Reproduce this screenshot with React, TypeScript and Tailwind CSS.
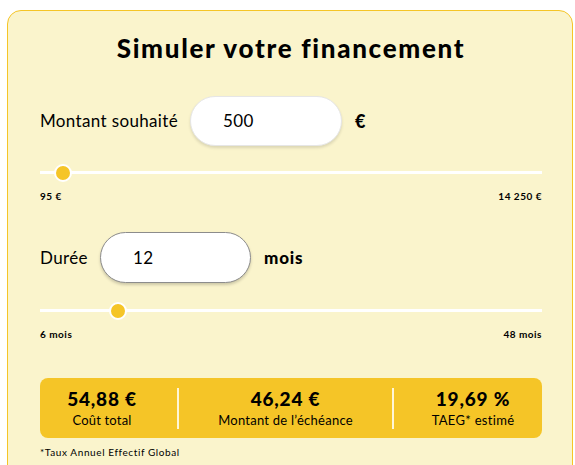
import React from "react";

function Slider({ pct }: { pct: number }) {
  return (
    <div className="relative h-[18px] w-full">
      <div className="absolute left-0 right-0 top-[7px] h-[3px] bg-white" />
      <div
        className="absolute top-0 h-[18px] w-[18px] rounded-full border-2 border-white bg-[#f5c527]"
        style={{ left: `calc(${pct} * (100% - 18px))` }}
      />
    </div>
  );
}

export default function App() {
  const font = { fontFamily: "Lato, 'Liberation Sans', sans-serif" };
  return (
    <div className="h-[465px] w-full overflow-hidden bg-white text-black" style={font}>
      <div className="ml-[7px] mt-[10px] h-[480px] w-[566px] rounded-[14px] border border-[#f5c527] bg-[#faf4cc] pl-[32px] pr-[30px] pt-[21px]">
        <h1 className="text-center text-[26px] font-black leading-[32px] tracking-[1.7px]">
          Simuler votre financement
        </h1>

        <div className="mt-[32px] flex items-center">
          <span className="w-[150px] text-[17px] leading-[22px] tracking-[0.35px]">Montant souhaité</span>
          <div className="flex h-[50px] w-[152px] items-center rounded-full border border-[#e6e6e6] bg-white pl-[32px] text-[17px] tracking-[0.4px] shadow-[0_2px_3px_rgba(0,0,0,0.12)]">
            500
          </div>
          <span className="ml-[13px] text-[18px] font-black">€</span>
        </div>

        <div className="mt-[18px]">
          <Slider pct={0.0286} />
        </div>
        <div className="mt-[7px] flex justify-between text-[10px] font-bold leading-[14px] tracking-[0.5px]">
          <span>95 €</span>
          <span>14 250 €</span>
        </div>

        <div className="mt-[29px] flex items-center">
          <span className="w-[60px] text-[17px] leading-[22px] tracking-[0.35px]">Durée</span>
          <div className="flex h-[51px] w-[151px] items-center rounded-full border border-[#8c8c8c] bg-white pl-[32px] text-[17px] tracking-[0.4px] shadow-[0_2px_3px_rgba(0,0,0,0.18)]">
            12
          </div>
          <span className="ml-[13px] text-[17px] font-black tracking-[0.8px]">mois</span>
        </div>

        <div className="mt-[19px]">
          <Slider pct={0.1429} />
        </div>
        <div className="mt-[7px] flex justify-between text-[10px] font-bold leading-[14px] tracking-[0.5px]">
          <span>6 mois</span>
          <span>48 mois</span>
        </div>

        <div className="mt-[37px] flex h-[60px] items-center rounded-[8px] bg-[#f5c527]">
          <div className="flex w-[137px] flex-col items-center pr-[13px]">
            <span className="text-[19px] font-black leading-[24px] tracking-[0.8px]">54,88 €</span>
            <span className="text-[13px] leading-[18px] tracking-[0.2px]">Coût total</span>
          </div>
          <div className="h-[41px] w-[2px] bg-[#fff6d6]" />
          <div className="flex w-[213px] flex-col items-center">
            <span className="text-[19px] font-black leading-[24px] tracking-[0.8px]">46,24 €</span>
            <span className="text-[13px] leading-[18px] tracking-[0.25px]">Montant de l’échéance</span>
          </div>
          <div className="h-[41px] w-[2px] bg-[#fff6d6]" />
          <div className="flex w-[148px] flex-col items-center pl-[10px]">
            <span className="text-[19px] font-black leading-[24px] tracking-[0.8px]">19,69 %</span>
            <span className="text-[13px] leading-[18px] tracking-[0.3px]">TAEG* estimé</span>
          </div>
        </div>

        <p className="mt-[7px] text-[10px] leading-[14px] tracking-[0.6px]">*Taux Annuel Effectif Global</p>
      </div>
    </div>
  );
}
